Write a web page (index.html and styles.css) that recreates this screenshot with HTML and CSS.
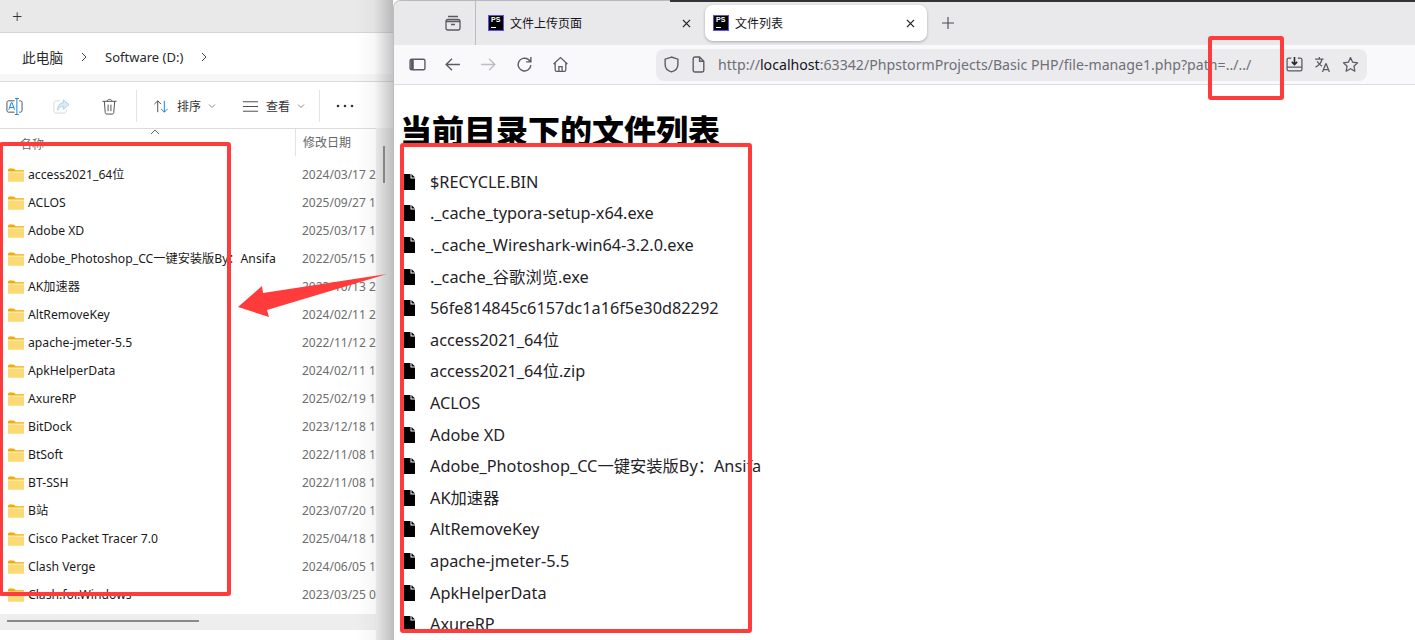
FILE: index.html
```html
<!DOCTYPE html>
<html lang="zh-CN">
<head>
<meta charset="utf-8">
<title>文件列表</title>
<link rel="stylesheet" href="styles.css">
</head>
<body>
<svg class="defs" width="0" height="0">
  <symbol id="folder" viewBox="0 0 16 14">
    <path d="M0 2.200C0 1.200.7.500 1.600.500h3.600c.5 0 .9.200 1.200.5L7.700 2.300H16V5H0z" fill="#f2ab0e"/>
    <path d="M0 3.600h14.600c.8 0 1.400.6 1.400 1.400v7.400c0 .8-.6 1.400-1.400 1.400H1.400C.6 13.800 0 13.200 0 12.400z" fill="#fbd974"/>
    <path d="M0 3.600h16V5H0z" fill="#fde79c"/>
  </symbol>
  <symbol id="file" viewBox="0 0 12 16">
    <path d="M0 0h7.500v4.500H12V16H0z" fill="#000"/>
    <path d="M8.500 0 12 3.500H8.500z" fill="#000"/>
  </symbol>
</svg>

<section class="explorer">
  <div class="ex-tabs"><span class="ex-plus">+</span></div>
  <div class="ex-address">
    <div class="ex-crumbs">
      <span class="crumb cjk">此电脑</span>
      <svg class="chev" viewBox="0 0 8 12"><path d="M2 2l4 4-4 4" fill="none" stroke="#444" stroke-width="1"/></svg>
      <span class="crumb">Software (D:)</span>
      <svg class="chev" viewBox="0 0 8 12"><path d="M2 2l4 4-4 4" fill="none" stroke="#444" stroke-width="1"/></svg>
    </div>
  </div>
  <div class="ex-toolbar">
    <svg class="tool rename" viewBox="0 0 18 18"><path d="M9 3H2.500C1.700 3 1 3.700 1 4.500v9c0 .8.700 1.500 1.500 1.500H9M14 3h1.500c.8 0 1.500.7 1.500 1.500v9c0 .8-.7 1.500-1.500 1.500H14" fill="none" stroke="#4b4b4b"/><path d="M9.500 .5h4M9.500 17.500h4M11.500 .5v17" fill="none" stroke="#0f7fd6"/><path d="M3 12.500 5.500 5h1L9 12.500M4 10h4" fill="none" stroke="#0f7fd6"/></svg>
    <svg class="tool share" viewBox="0 0 18 18"><path d="M7 3H3C2 3 1 4 1 5v9c0 1 1 2 2 2h9c1 0 2-1 2-2v-2" fill="none" stroke="#d6d6d6"/><path d="M11 2l6 5-6 5V9C8 9 6 10 5 13c0-5 2-7.500 6-8z" fill="#dbeaf7" stroke="#a9cfeb"/></svg>
    <svg class="tool trash" viewBox="0 0 18 18"><path d="M1.500 3.500h15M6.500 3.500c0-1.200.9-2 2.500-2s2.500.8 2.500 2M3.500 3.500l1 12c.1.800.7 1.500 1.500 1.500h6c.8 0 1.400-.7 1.500-1.500l1-12M7.500 7v7M10.500 7v7" fill="none" stroke="#4a4a4a"/></svg>
    <span class="tool-sep"></span>
    <button class="tool-btn sort">
      <svg class="tool" viewBox="0 0 18 18"><path d="M5 15V3M1.500 6.500 5 3l3.500 3.500" fill="none" stroke="#444"/><path d="M12 3v12M8.500 11.500 12 15l3.500-3.500" fill="none" stroke="#0f7fd6"/></svg>
      <span>排序</span>
      <svg class="caret" viewBox="0 0 8 6"><path d="M1 1.500l3 3 3-3" fill="none" stroke="#8a8a8a"/></svg>
    </button>
    <button class="tool-btn view">
      <svg class="tool" viewBox="0 0 18 18"><path d="M1 4h16M1 9h16M1 14h16" fill="none" stroke="#444"/></svg>
      <span>查看</span>
      <svg class="caret" viewBox="0 0 8 6"><path d="M1 1.500l3 3 3-3" fill="none" stroke="#8a8a8a"/></svg>
    </button>
    <span class="tool-sep sep2"></span>
    <svg class="more" viewBox="0 0 18 4"><circle cx="2" cy="2" r="1.300"/><circle cx="9" cy="2" r="1.300"/><circle cx="16" cy="2" r="1.300"/></svg>
  </div>
  <div class="ex-head">
    <svg class="sort-up" viewBox="0 0 10 6"><path d="M1 5l4-4 4 4" fill="none" stroke="#666"/></svg>
    <span class="col-name">名称</span>
    <span class="col-date">修改日期</span>
  </div>
  <ul class="ex-list">
    <li><svg class="folder"><use href="#folder"/></svg><span class="n">access2021_64位</span><span class="d">2024/03/17 2</span></li>
    <li><svg class="folder"><use href="#folder"/></svg><span class="n">ACLOS</span><span class="d">2025/09/27 1</span></li>
    <li><svg class="folder"><use href="#folder"/></svg><span class="n">Adobe XD</span><span class="d">2025/03/17 1</span></li>
    <li><svg class="folder"><use href="#folder"/></svg><span class="n">Adobe_Photoshop_CC一键安装版By：Ansifa</span><span class="d">2022/05/15 1</span></li>
    <li><svg class="folder"><use href="#folder"/></svg><span class="n">AK加速器</span><span class="d">2023/10/13 2</span></li>
    <li><svg class="folder"><use href="#folder"/></svg><span class="n">AltRemoveKey</span><span class="d">2024/02/11 2</span></li>
    <li><svg class="folder"><use href="#folder"/></svg><span class="n">apache-jmeter-5.5</span><span class="d">2022/11/12 2</span></li>
    <li><svg class="folder"><use href="#folder"/></svg><span class="n">ApkHelperData</span><span class="d">2024/02/11 1</span></li>
    <li><svg class="folder"><use href="#folder"/></svg><span class="n">AxureRP</span><span class="d">2025/02/19 1</span></li>
    <li><svg class="folder"><use href="#folder"/></svg><span class="n">BitDock</span><span class="d">2023/12/18 1</span></li>
    <li><svg class="folder"><use href="#folder"/></svg><span class="n">BtSoft</span><span class="d">2022/11/08 1</span></li>
    <li><svg class="folder"><use href="#folder"/></svg><span class="n">BT-SSH</span><span class="d">2022/11/08 1</span></li>
    <li><svg class="folder"><use href="#folder"/></svg><span class="n">B站</span><span class="d">2023/07/20 1</span></li>
    <li><svg class="folder"><use href="#folder"/></svg><span class="n">Cisco Packet Tracer 7.0</span><span class="d">2025/04/18 1</span></li>
    <li><svg class="folder"><use href="#folder"/></svg><span class="n">Clash Verge</span><span class="d">2024/06/05 1</span></li>
    <li><svg class="folder"><use href="#folder"/></svg><span class="n">Clash.for.Windows</span><span class="d">2023/03/25 0</span></li>
  </ul>
  <div class="ex-hscroll"><span class="ex-hthumb"></span></div>
  <span class="ex-vtrack"></span>
  <span class="ex-vthumb"></span>
  <span class="ex-shadow"></span>
</section>

<section class="browser">
  <div class="br-tabs">
    <svg class="tabgroup" viewBox="0 0 18 18"><path d="M4 2.500h10M2 7.500c0-1 .6-2 2-2h10c1.400 0 2 1 2 2v6.500c0 1-.8 2-2 2H4c-1.200 0-2-1-2-2zM2 7.500h14M7 10.500h4" fill="none" stroke="#5a5a60" stroke-width="1.300"/></svg>
    <span class="tab-sep"></span>
    <div class="tab">
      <span class="ps"><b>PS</b><i></i></span>
      <span class="tab-title">文件上传页面</span>
      <svg class="x" viewBox="0 0 10 10"><path d="M1 1l8 8M9 1l-8 8" stroke="#1c1c1c" stroke-width="1.300"/></svg>
    </div>
    <div class="tab active">
      <span class="ps"><b>PS</b><i></i></span>
      <span class="tab-title">文件列表</span>
      <svg class="x" viewBox="0 0 10 10"><path d="M1 1l8 8M9 1l-8 8" stroke="#1c1c1c" stroke-width="1.300"/></svg>
    </div>
    <svg class="newtab" viewBox="0 0 14 14"><path d="M7 1v12M1 7h12" stroke="#4a4a4f" stroke-width="1.100"/></svg>
  </div>
  <div class="br-toolbar">
    <svg class="ic sidebar" viewBox="0 0 16 14"><rect x="1" y="2" width="14" height="10" rx="1.500" fill="none" stroke="#5b5b66" stroke-width="1.300"/><path d="M1.500 2.500h3v9h-3z" fill="#5b5b66"/></svg>
    <svg class="ic back" viewBox="0 0 16 16"><path d="M15 8H2M7.500 2.500 2 8l5.500 5.500" fill="none" stroke="#5b5b66" stroke-width="1.300"/></svg>
    <svg class="ic fwd" viewBox="0 0 16 16"><path d="M1 8h13M8.500 2.500 14 8l-5.500 5.500" fill="none" stroke="#bdbdc3" stroke-width="1.300"/></svg>
    <svg class="ic reload" viewBox="0 0 16 16"><path d="M14 8.500A6 6 0 1 1 11.500 3.200L14 5.500M14 1v4.500H9.500" fill="none" stroke="#5b5b66" stroke-width="1.300"/></svg>
    <svg class="ic home" viewBox="0 0 16 16"><path d="M1.500 7.500 8 1.500l6.500 6M3 6.500V13c0 .8.500 1.500 1.500 1.500h7c1 0 1.500-.7 1.500-1.500V6.500M6.500 14.500V10h3v4.500" fill="none" stroke="#5b5b66" stroke-width="1.200"/></svg>
    <div class="urlbar">
      <svg class="ic shield" viewBox="0 0 16 16"><path d="M8 1 2 3v5c0 3.500 2.500 6 6 7 3.500-1 6-3.500 6-7V3z" fill="none" stroke="#5b5b66" stroke-width="1.300"/></svg>
      <svg class="ic page" viewBox="0 0 12 16"><path d="M1 2.500C1 1.700 1.700 1 2.500 1H7l4 4v8.500c0 .8-.7 1.500-1.500 1.500h-7C1.700 15 1 14.300 1 13.500zM7 1v4h4" fill="none" stroke="#5b5b66" stroke-width="1.300"/></svg>
      <span class="url">http://<em>localhost</em>:63342/PhpstormProjects/Basic PHP/file-manage1.php?path=../../</span>
      <svg class="ic save" viewBox="0 0 16 16"><path d="M5 2H2.500C1.700 2 1 2.700 1 3.500v9c0 .8.700 1.500 1.500 1.500h11c.8 0 1.500-.7 1.500-1.500v-9c0-.8-.7-1.500-1.500-1.500H11M1 10.500h14" fill="none" stroke="#5b5b66" stroke-width="1.200"/><path d="M8 1v6.500M5.500 5.500 8 8l2.500-2.500" fill="none" stroke="#26262b" stroke-width="1.500"/></svg>
      <svg class="ic translate" viewBox="0 0 16 16"><path d="M1 3h8M5 1v2M7.500 3C7 6 4.500 9 1.500 10.500M3 5c1 2 2.500 3.500 4.500 4.500M8 15l3-7.500h.5L14.500 15M9 12.800h5" fill="none" stroke="#5b5b66" stroke-width="1.200"/></svg>
      <svg class="ic star" viewBox="0 0 16 16"><path d="m8 1.500 2 4.300 4.700.6-3.500 3.200.9 4.700L8 12l-4.100 2.300.9-4.700L1.300 6.400 6 5.800z" fill="none" stroke="#5b5b66" stroke-width="1.200" stroke-linejoin="round"/></svg>
    </div>
  </div>
  <main class="page-body">
    <h1>当前目录下的文件列表</h1>
    <ul class="files">
      <li><svg class="fi"><use href="#file"/></svg>$RECYCLE.BIN</li>
      <li><svg class="fi"><use href="#file"/></svg>._cache_typora-setup-x64.exe</li>
      <li><svg class="fi"><use href="#file"/></svg>._cache_Wireshark-win64-3.2.0.exe</li>
      <li><svg class="fi"><use href="#file"/></svg>._cache_谷歌浏览.exe</li>
      <li><svg class="fi"><use href="#file"/></svg>56fe814845c6157dc1a16f5e30d82292</li>
      <li><svg class="fi"><use href="#file"/></svg>access2021_64位</li>
      <li><svg class="fi"><use href="#file"/></svg>access2021_64位.zip</li>
      <li><svg class="fi"><use href="#file"/></svg>ACLOS</li>
      <li><svg class="fi"><use href="#file"/></svg>Adobe XD</li>
      <li><svg class="fi"><use href="#file"/></svg>Adobe_Photoshop_CC一键安装版By：Ansifa</li>
      <li><svg class="fi"><use href="#file"/></svg>AK加速器</li>
      <li><svg class="fi"><use href="#file"/></svg>AltRemoveKey</li>
      <li><svg class="fi"><use href="#file"/></svg>apache-jmeter-5.5</li>
      <li><svg class="fi"><use href="#file"/></svg>ApkHelperData</li>
      <li><svg class="fi"><use href="#file"/></svg>AxureRP</li>
    </ul>
  </main>
</section>

<span class="topline"></span>
<span class="mark mark-left"></span>
<span class="mark mark-right"></span>
<span class="mark mark-url"></span>
<svg class="arrow" viewBox="0 0 150 47"><path d="M149 1 25 20 24 13 0 34 31 44 29 37z" fill="#ff3b3b"/></svg>
</body>
</html>
```
FILE: styles.css
```css
* { box-sizing: border-box; }
html, body { margin: 0; padding: 0; }
body {
  position: relative;
  width: 1415px;
  height: 640px;
  overflow: hidden;
  background: #fff;
  font-family: "Noto Sans", "Noto Sans CJK SC", sans-serif;
  color: #1a1a1a;
}
ul { list-style: none; margin: 0; padding: 0; }
.defs { position: absolute; }

/* Explorer window */
.explorer {
  position: absolute;
  left: 0; top: 0;
  width: 393px; height: 640px;
  display: flex;
  flex-direction: column;
  background: #fff;
  overflow: hidden;
}
.ex-tabs {
  height: 33px;
  flex: none;
  background: #e9e9e9;
  border-bottom: 1px solid #d5d5d5;
  padding-left: 12px;
  display: flex;
  align-items: center;
}
.ex-plus { font-size: 18px; font-weight: 300; color: #333; line-height: 1; margin-top: -1px; }
.ex-address {
  height: 49px;
  flex: none;
  padding-top: 8px;
  background: linear-gradient(#fff 0 41px, #f7f7f7 41px);
  border-bottom: 1px solid #d9d9d9;
}
.ex-crumbs {
  height: 32px;
  background: #fff;
  display: flex;
  align-items: center;
  padding-left: 22px;
  font-size: 13px;
  color: #2a2a2a;
}
.cjk { font-size: 13.700px; }
.chev { width: 8px; height: 12px; margin: 0 17px; }
.ex-toolbar {
  height: 47px;
  flex: none;
  border-bottom: 1px solid #dcdcdc;
  display: flex;
  align-items: center;
  padding: 2px 0 0 6px;
  font-size: 12px;
  color: #333;
}
.tool { width: 17px; height: 17px; flex: none; }
.share { margin-left: 30px; }
.trash { margin-left: 31px; }
.tool-sep { width: 1px; height: 32px; background: #e3e3e3; margin-left: 18px; flex: none; }
.tool-btn {
  display: flex;
  align-items: center;
  gap: 7px;
  border: 0;
  padding: 0;
  background: none;
  font: inherit;
  color: inherit;
}
.sort { margin-left: 16px; }
.view { margin-left: 26px; }
.caret { width: 8px; height: 6px; }
.sep2 { margin-left: 14px; }
.more { width: 18px; height: 4px; margin-left: 16px; fill: #333; }
.ex-head {
  position: relative;
  height: 27px;
  flex: none;
  font-size: 12px;
  color: #666;
  display: flex;
  align-items: center;
  padding-left: 20px;
  padding-top: 3px;
}
.sort-up { position: absolute; left: 150px; top: 0; width: 10px; height: 6px; }
.col-name { width: 275px; }
.col-date {
  height: 27px;
  line-height: 27px;
  border-left: 1px solid #e3e3e3;
  padding-left: 7px;
  margin-top: -3px;
}
.ex-list { flex: 1; min-height: 0; padding-top: 5px; overflow: hidden; }
.ex-list li {
  height: 28px;
  display: flex;
  align-items: center;
  padding-left: 8px;
  font-size: 12.200px;
  line-height: 16px;
  white-space: nowrap;
}
.folder { width: 16px; height: 14px; flex: none; margin-right: 4px; }
.n { width: 274px; flex: none; color: #1a1a1a; }
.d { color: #6d6d6d; font-size: 12px; flex: none; }
.ex-hscroll {
  height: 16px;
  flex: none;
  margin-bottom: 10px;
  background: #eee;
  width: 376px;
  padding: 6px 0 0 7px;
}
.ex-hthumb { display: block; width: 192px; height: 2px; background: #8a8a8a; }
.ex-vtrack { position: absolute; left: 376px; right: 0; top: 128px; bottom: 0; background: #f3f3f3; }
.ex-vthumb { position: absolute; left: 383px; top: 146px; width: 2px; height: 37px; background: #8a8a8a; }
.ex-shadow {
  position: absolute;
  right: 0; top: 0; bottom: 0;
  width: 38px;
  background: linear-gradient(90deg, rgba(120,120,120,0), rgba(120,120,120,.06) 50%, rgba(120,120,120,.42));
}

/* Browser window */
.browser {
  position: absolute;
  left: 393px; top: 0;
  width: 1022px; height: 640px;
  display: flex;
  flex-direction: column;
  background: #fff;
  border-left: 1px solid #bdbdbd;
  border-top: 1px solid #b9b9b9;
  border-top-left-radius: 8px;
  overflow: hidden;
}
.br-tabs {
  height: 44px;
  flex: none;
  background: #e9e9ec;
  display: flex;
  align-items: center;
}
.tabgroup { width: 18px; height: 18px; margin-left: 50px; flex: none; }
.tab-sep { width: 1px; height: 44px; background: #bcbcc0; margin-left: 13px; flex: none; }
.tab {
  width: 227px;
  height: 36px;
  display: flex;
  align-items: center;
  padding-left: 12px;
  font-size: 12px;
  color: #15141a;
  position: relative;
  flex: none;
}
.tab.active {
  width: 222px;
  background: #fff;
  border-radius: 8px;
  box-shadow: 0 1px 3px rgba(0,0,0,.28);
  margin-left: 2px;
  padding-left: 8px;
}
.ps {
  position: relative;
  display: block;
  width: 16px; height: 16px;
  background: #000;
  border: 1px solid #5b4ff5;
  flex: none;
  margin-right: 6px;
  color: #fff;
  overflow: hidden;
}
.ps b { position: absolute; left: 2px; top: -1px; font-size: 7px; font-weight: 700; line-height: 10px; font-family: "Liberation Sans", sans-serif; }
.ps i { position: absolute; left: 2px; bottom: 2px; width: 5px; height: 1px; background: #fff; }
.tab-title { flex: 1; }
.x { width: 9px; height: 9px; position: absolute; right: 12px; top: 14px; }
.newtab { width: 14px; height: 14px; margin-left: 14px; }
.br-toolbar {
  height: 40px;
  flex: none;
  background: #f9f9fb;
  border-bottom: 1px solid #dcdce0;
  display: flex;
  align-items: center;
  padding-left: 15px;
}
.ic { width: 17px; height: 17px; flex: none; }
.back { margin-left: 18px; }
.fwd { margin-left: 19px; }
.reload { margin-left: 19px; }
.home { margin-left: 19px; }
.urlbar {
  margin-left: 87px;
  width: 711px;
  height: 32px;
  background: #ebebee;
  border-radius: 8px;
  display: flex;
  align-items: center;
  padding-left: 7px;
}
.page { margin-left: 12px; width: 13px; }
.url {
  margin-left: 13px;
  width: 564px;
  font-size: 14.150px;
  color: #6f6f76;
  white-space: nowrap;
  flex: none;
}
.url em { font-style: normal; color: #15141a; }
.save { margin-left: 4px; }
.translate { margin-left: 11px; }
.star { margin-left: 11px; }
.page-body { flex: 1; min-height: 0; overflow: hidden; padding: 0 0 0 6px; color: #000; }
h1 {
  margin: 25px 0 0;
  font-size: 32px;
  line-height: 42px;
  font-weight: 900;
}
.files { margin-top: 14px; }
.files li {
  height: 31.600px;
  display: flex;
  align-items: center;
  font-size: 16.300px;
  line-height: 22px;
  color: #1f2328;
  white-space: nowrap;
}
.fi { width: 12px; height: 16px; flex: none; margin-right: 15px; margin-left: 3px; }

/* Annotations */
.topline { position: absolute; left: 670px; right: 0; top: 0; height: 2px; background: #333; }
.mark {
  position: absolute;
  border: 4px solid #ff3b3b;
  border-radius: 3px;
}
.mark-left { left: -1px; top: 142px; width: 232px; height: 454px; }
.mark-right { left: 400px; top: 143px; width: 352px; height: 490px; }
.mark-url { left: 1208px; top: 36px; width: 76px; height: 64px; }
.arrow { position: absolute; left: 238px; top: 273px; width: 150px; height: 47px; }
```
